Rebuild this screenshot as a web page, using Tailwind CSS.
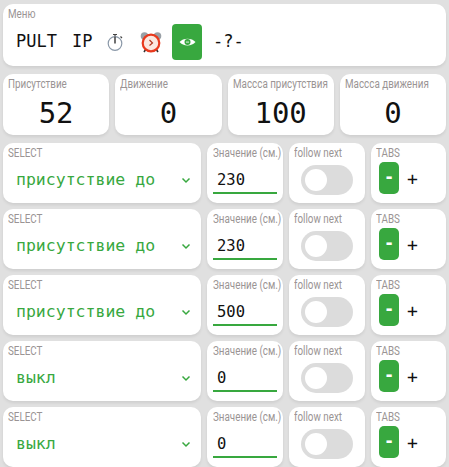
<!DOCTYPE html>
<html lang="ru">
  <head>
    <meta charset="UTF-8" />
    <title>Меню</title>
    <script src="https://cdn.jsdelivr.net/npm/@tailwindcss/browser@4"></script>
  </head>
  <body class="bg-[#e0e0e0] w-[449px] h-[467px] overflow-hidden font-['DejaVu_Sans_Mono',monospace]">
    <div class="flex flex-col pt-1 px-[3px]">
      <!-- menu -->
      <div class="bg-white rounded-[10px] shadow-[0_2px_3px_rgba(0,0,0,0.08)] h-[62px] px-[5px] pt-[3px]">
        <div class="font-['Roboto',sans-serif] text-[12px] leading-[14px] text-[#9a9494] origin-left scale-x-[0.82]">Меню</div>
        <div class="flex items-center h-9 mt-[3px] text-[17px] text-[#111]">
          <span class="ml-[8px] w-[56px]">PULT</span>
          <span class="w-[35px]">IP</span>
          <svg width="16" height="18" viewBox="0 0 16 18" fill="none">
            <circle cx="8" cy="10.500" r="6.800" stroke="#8a98a8" stroke-width="1.200" />
            <path d="M8 10.500V4" stroke="#222" stroke-width="1.300" />
            <path d="M6 1.500h4M8 1.500v2M13.500 3.500l1.500 1.500" stroke="#444" stroke-width="1.200" />
          </svg>
          <svg class="ml-[16px]" width="24" height="22" viewBox="0 0 24 22">
            <circle cx="5.500" cy="5" r="3.800" fill="#99a0a6" />
            <circle cx="18.500" cy="5" r="3.800" fill="#99a0a6" />
            <path d="M5 21l2-3M19 21l-2-3" stroke="#333" stroke-width="1.600" />
            <circle cx="12" cy="12" r="8.300" fill="#fbe7df" stroke="#e8391d" stroke-width="2.200" />
            <path d="M10.500 9l3 3-3 2.500" stroke="#b3341c" stroke-width="1.200" fill="none" />
          </svg>
          <span class="ml-[9px] flex items-center justify-center w-[30px] h-9 rounded-[4px] bg-[#38a83f]">
            <svg width="17" height="10" viewBox="0 0 17 10">
              <path d="M0.500 5C4 0.500 13 0.500 16.500 5 13 9.500 4 9.500 0.500 5z" fill="#fff" />
              <circle cx="8.500" cy="5" r="3" fill="#38a83f" />
              <path d="M7 4.500h3v1.200H7z" fill="#fff" opacity="0.700" />
            </svg>
          </span>
          <span class="ml-[11px]">-?-</span>
        </div>
      </div>

      <!-- sensors -->
      <div class="grid grid-cols-4 gap-[6px] mt-2">
        <div class="bg-white rounded-[10px] shadow-[0_2px_3px_rgba(0,0,0,0.08)] h-[61px] px-[5px] pt-[3px]">
          <div class="font-['Roboto',sans-serif] text-[12px] leading-[14px] text-[#9a9494] origin-left scale-x-[0.82] whitespace-nowrap">Присутствие</div>
          <div class="text-center text-[29px] leading-[34px] mt-[5px] text-[#111]">52</div>
        </div>
        <div class="bg-white rounded-[10px] shadow-[0_2px_3px_rgba(0,0,0,0.08)] h-[61px] px-[5px] pt-[3px]">
          <div class="font-['Roboto',sans-serif] text-[12px] leading-[14px] text-[#9a9494] origin-left scale-x-[0.82] whitespace-nowrap">Движение</div>
          <div class="text-center text-[29px] leading-[34px] mt-[5px] text-[#111]">0</div>
        </div>
        <div class="bg-white rounded-[10px] shadow-[0_2px_3px_rgba(0,0,0,0.08)] h-[61px] px-[5px] pt-[3px]">
          <div class="font-['Roboto',sans-serif] text-[12px] leading-[14px] text-[#9a9494] origin-left scale-x-[0.82] whitespace-nowrap">Массса присутствия</div>
          <div class="text-center text-[29px] leading-[34px] mt-[5px] text-[#111]">100</div>
        </div>
        <div class="bg-white rounded-[10px] shadow-[0_2px_3px_rgba(0,0,0,0.08)] h-[61px] px-[5px] pt-[3px]">
          <div class="font-['Roboto',sans-serif] text-[12px] leading-[14px] text-[#9a9494] origin-left scale-x-[0.82] whitespace-nowrap">Массса движения</div>
          <div class="text-center text-[29px] leading-[34px] mt-[5px] text-[#111]">0</div>
        </div>
      </div>

      <!-- rows -->
      <div class="flex flex-col gap-[6px] mt-2">
        <div class="grid grid-cols-[198px_76px_76px_75px] gap-[6px] h-[60px]">
          <div class="bg-white rounded-[10px] shadow-[0_2px_3px_rgba(0,0,0,0.08)] px-[5px] pt-[3px]">
            <div class="font-['Roboto',sans-serif] text-[12px] leading-[14px] text-[#9a9494] origin-left scale-x-[0.82]">SELECT</div>
            <div class="flex items-center justify-between h-[34px] mt-[3px] pl-[8px] pr-[5px] text-[16.500px] text-[#38a83f]">
              <span>присутствие до</span>
              <svg width="10" height="7" viewBox="0 0 10 7" fill="none"><path d="M1.500 1.500L5 5l3.500-3.500" stroke="#38a83f" stroke-width="1.500" /></svg>
            </div>
          </div>
          <div class="bg-white rounded-[10px] shadow-[0_2px_3px_rgba(0,0,0,0.08)] px-[6px] pt-[3px] overflow-hidden">
            <div class="font-['Roboto',sans-serif] text-[12px] leading-[14px] text-[#9a9494] origin-left scale-x-[0.82] whitespace-nowrap">Значение (см.)</div>
            <div class="h-[27px] mt-[7px] pl-[4px] pt-[2px] border-b-2 border-[#38a83f] w-[64px] text-[15.500px] leading-[22px] text-[#111]">230</div>
          </div>
          <div class="bg-white rounded-[10px] shadow-[0_2px_3px_rgba(0,0,0,0.08)] px-[5px] pt-[3px]">
            <div class="font-['Roboto',sans-serif] text-[12px] leading-[14px] text-[#9a9494] origin-left scale-x-[0.82] whitespace-nowrap">follow next</div>
            <div class="mt-[5px] ml-[7px] w-[52px] h-[30px] rounded-full bg-[#dcdcdc] p-[4px]"><div class="w-[22px] h-[22px] rounded-full bg-white"></div></div>
          </div>
          <div class="bg-white rounded-[10px] shadow-[0_2px_3px_rgba(0,0,0,0.08)] px-[5px] pt-[3px]">
            <div class="font-['Roboto',sans-serif] text-[12px] leading-[14px] text-[#9a9494] origin-left scale-x-[0.82]">TABS</div>
            <div class="flex items-center mt-[2px] ml-[3px]">
              <span class="flex items-center justify-center w-5 h-8 rounded-[5px] bg-[#38a83f] text-white font-bold text-[17px]">-</span>
              <span class="ml-[8px] text-[18px] text-[#111]">+</span>
            </div>
          </div>
        </div>

        <div class="grid grid-cols-[198px_76px_76px_75px] gap-[6px] h-[60px]">
          <div class="bg-white rounded-[10px] shadow-[0_2px_3px_rgba(0,0,0,0.08)] px-[5px] pt-[3px]">
            <div class="font-['Roboto',sans-serif] text-[12px] leading-[14px] text-[#9a9494] origin-left scale-x-[0.82]">SELECT</div>
            <div class="flex items-center justify-between h-[34px] mt-[3px] pl-[8px] pr-[5px] text-[16.500px] text-[#38a83f]">
              <span>присутствие до</span>
              <svg width="10" height="7" viewBox="0 0 10 7" fill="none"><path d="M1.500 1.500L5 5l3.500-3.500" stroke="#38a83f" stroke-width="1.500" /></svg>
            </div>
          </div>
          <div class="bg-white rounded-[10px] shadow-[0_2px_3px_rgba(0,0,0,0.08)] px-[6px] pt-[3px] overflow-hidden">
            <div class="font-['Roboto',sans-serif] text-[12px] leading-[14px] text-[#9a9494] origin-left scale-x-[0.82] whitespace-nowrap">Значение (см.)</div>
            <div class="h-[27px] mt-[7px] pl-[4px] pt-[2px] border-b-2 border-[#38a83f] w-[64px] text-[15.500px] leading-[22px] text-[#111]">230</div>
          </div>
          <div class="bg-white rounded-[10px] shadow-[0_2px_3px_rgba(0,0,0,0.08)] px-[5px] pt-[3px]">
            <div class="font-['Roboto',sans-serif] text-[12px] leading-[14px] text-[#9a9494] origin-left scale-x-[0.82] whitespace-nowrap">follow next</div>
            <div class="mt-[5px] ml-[7px] w-[52px] h-[30px] rounded-full bg-[#dcdcdc] p-[4px]"><div class="w-[22px] h-[22px] rounded-full bg-white"></div></div>
          </div>
          <div class="bg-white rounded-[10px] shadow-[0_2px_3px_rgba(0,0,0,0.08)] px-[5px] pt-[3px]">
            <div class="font-['Roboto',sans-serif] text-[12px] leading-[14px] text-[#9a9494] origin-left scale-x-[0.82]">TABS</div>
            <div class="flex items-center mt-[2px] ml-[3px]">
              <span class="flex items-center justify-center w-5 h-8 rounded-[5px] bg-[#38a83f] text-white font-bold text-[17px]">-</span>
              <span class="ml-[8px] text-[18px] text-[#111]">+</span>
            </div>
          </div>
        </div>

        <div class="grid grid-cols-[198px_76px_76px_75px] gap-[6px] h-[60px]">
          <div class="bg-white rounded-[10px] shadow-[0_2px_3px_rgba(0,0,0,0.08)] px-[5px] pt-[3px]">
            <div class="font-['Roboto',sans-serif] text-[12px] leading-[14px] text-[#9a9494] origin-left scale-x-[0.82]">SELECT</div>
            <div class="flex items-center justify-between h-[34px] mt-[3px] pl-[8px] pr-[5px] text-[16.500px] text-[#38a83f]">
              <span>присутствие до</span>
              <svg width="10" height="7" viewBox="0 0 10 7" fill="none"><path d="M1.500 1.500L5 5l3.500-3.500" stroke="#38a83f" stroke-width="1.500" /></svg>
            </div>
          </div>
          <div class="bg-white rounded-[10px] shadow-[0_2px_3px_rgba(0,0,0,0.08)] px-[6px] pt-[3px] overflow-hidden">
            <div class="font-['Roboto',sans-serif] text-[12px] leading-[14px] text-[#9a9494] origin-left scale-x-[0.82] whitespace-nowrap">Значение (см.)</div>
            <div class="h-[27px] mt-[7px] pl-[4px] pt-[2px] border-b-2 border-[#38a83f] w-[64px] text-[15.500px] leading-[22px] text-[#111]">500</div>
          </div>
          <div class="bg-white rounded-[10px] shadow-[0_2px_3px_rgba(0,0,0,0.08)] px-[5px] pt-[3px]">
            <div class="font-['Roboto',sans-serif] text-[12px] leading-[14px] text-[#9a9494] origin-left scale-x-[0.82] whitespace-nowrap">follow next</div>
            <div class="mt-[5px] ml-[7px] w-[52px] h-[30px] rounded-full bg-[#dcdcdc] p-[4px]"><div class="w-[22px] h-[22px] rounded-full bg-white"></div></div>
          </div>
          <div class="bg-white rounded-[10px] shadow-[0_2px_3px_rgba(0,0,0,0.08)] px-[5px] pt-[3px]">
            <div class="font-['Roboto',sans-serif] text-[12px] leading-[14px] text-[#9a9494] origin-left scale-x-[0.82]">TABS</div>
            <div class="flex items-center mt-[2px] ml-[3px]">
              <span class="flex items-center justify-center w-5 h-8 rounded-[5px] bg-[#38a83f] text-white font-bold text-[17px]">-</span>
              <span class="ml-[8px] text-[18px] text-[#111]">+</span>
            </div>
          </div>
        </div>

        <div class="grid grid-cols-[198px_76px_76px_75px] gap-[6px] h-[60px]">
          <div class="bg-white rounded-[10px] shadow-[0_2px_3px_rgba(0,0,0,0.08)] px-[5px] pt-[3px]">
            <div class="font-['Roboto',sans-serif] text-[12px] leading-[14px] text-[#9a9494] origin-left scale-x-[0.82]">SELECT</div>
            <div class="flex items-center justify-between h-[34px] mt-[3px] pl-[8px] pr-[5px] text-[16.500px] text-[#38a83f]">
              <span>выкл</span>
              <svg width="10" height="7" viewBox="0 0 10 7" fill="none"><path d="M1.500 1.500L5 5l3.500-3.500" stroke="#38a83f" stroke-width="1.500" /></svg>
            </div>
          </div>
          <div class="bg-white rounded-[10px] shadow-[0_2px_3px_rgba(0,0,0,0.08)] px-[6px] pt-[3px] overflow-hidden">
            <div class="font-['Roboto',sans-serif] text-[12px] leading-[14px] text-[#9a9494] origin-left scale-x-[0.82] whitespace-nowrap">Значение (см.)</div>
            <div class="h-[27px] mt-[7px] pl-[4px] pt-[2px] border-b-2 border-[#38a83f] w-[64px] text-[15.500px] leading-[22px] text-[#111]">0</div>
          </div>
          <div class="bg-white rounded-[10px] shadow-[0_2px_3px_rgba(0,0,0,0.08)] px-[5px] pt-[3px]">
            <div class="font-['Roboto',sans-serif] text-[12px] leading-[14px] text-[#9a9494] origin-left scale-x-[0.82] whitespace-nowrap">follow next</div>
            <div class="mt-[5px] ml-[7px] w-[52px] h-[30px] rounded-full bg-[#dcdcdc] p-[4px]"><div class="w-[22px] h-[22px] rounded-full bg-white"></div></div>
          </div>
          <div class="bg-white rounded-[10px] shadow-[0_2px_3px_rgba(0,0,0,0.08)] px-[5px] pt-[3px]">
            <div class="font-['Roboto',sans-serif] text-[12px] leading-[14px] text-[#9a9494] origin-left scale-x-[0.82]">TABS</div>
            <div class="flex items-center mt-[2px] ml-[3px]">
              <span class="flex items-center justify-center w-5 h-8 rounded-[5px] bg-[#38a83f] text-white font-bold text-[17px]">-</span>
              <span class="ml-[8px] text-[18px] text-[#111]">+</span>
            </div>
          </div>
        </div>

        <div class="grid grid-cols-[198px_76px_76px_75px] gap-[6px] h-[60px]">
          <div class="bg-white rounded-[10px] shadow-[0_2px_3px_rgba(0,0,0,0.08)] px-[5px] pt-[3px]">
            <div class="font-['Roboto',sans-serif] text-[12px] leading-[14px] text-[#9a9494] origin-left scale-x-[0.82]">SELECT</div>
            <div class="flex items-center justify-between h-[34px] mt-[3px] pl-[8px] pr-[5px] text-[16.500px] text-[#38a83f]">
              <span>выкл</span>
              <svg width="10" height="7" viewBox="0 0 10 7" fill="none"><path d="M1.500 1.500L5 5l3.500-3.500" stroke="#38a83f" stroke-width="1.500" /></svg>
            </div>
          </div>
          <div class="bg-white rounded-[10px] shadow-[0_2px_3px_rgba(0,0,0,0.08)] px-[6px] pt-[3px] overflow-hidden">
            <div class="font-['Roboto',sans-serif] text-[12px] leading-[14px] text-[#9a9494] origin-left scale-x-[0.82] whitespace-nowrap">Значение (см.)</div>
            <div class="h-[27px] mt-[7px] pl-[4px] pt-[2px] border-b-2 border-[#38a83f] w-[64px] text-[15.500px] leading-[22px] text-[#111]">0</div>
          </div>
          <div class="bg-white rounded-[10px] shadow-[0_2px_3px_rgba(0,0,0,0.08)] px-[5px] pt-[3px]">
            <div class="font-['Roboto',sans-serif] text-[12px] leading-[14px] text-[#9a9494] origin-left scale-x-[0.82] whitespace-nowrap">follow next</div>
            <div class="mt-[5px] ml-[7px] w-[52px] h-[30px] rounded-full bg-[#dcdcdc] p-[4px]"><div class="w-[22px] h-[22px] rounded-full bg-white"></div></div>
          </div>
          <div class="bg-white rounded-[10px] shadow-[0_2px_3px_rgba(0,0,0,0.08)] px-[5px] pt-[3px]">
            <div class="font-['Roboto',sans-serif] text-[12px] leading-[14px] text-[#9a9494] origin-left scale-x-[0.82]">TABS</div>
            <div class="flex items-center mt-[2px] ml-[3px]">
              <span class="flex items-center justify-center w-5 h-8 rounded-[5px] bg-[#38a83f] text-white font-bold text-[17px]">-</span>
              <span class="ml-[8px] text-[18px] text-[#111]">+</span>
            </div>
          </div>
        </div>
      </div>
    </div>
  </body>
</html>
